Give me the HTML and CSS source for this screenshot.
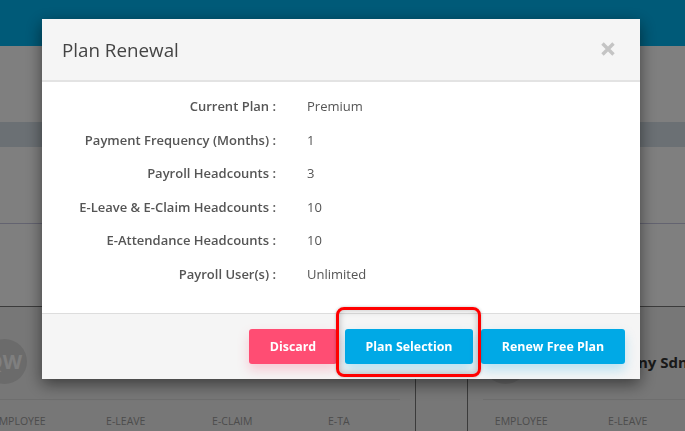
FILE: index.html
```html
<!DOCTYPE html>
<html lang="en">
<head>
    <meta charset="UTF-8">
    <meta name="viewport" content="width=device-width, initial-scale=1.0">
    <title>Plan Renewal</title>
    <link rel="stylesheet" href="styles.css">
</head>
<body>
    <!-- page behind the dialog -->
    <div class="page">
        <div class="topbar"></div>
        <div class="subhead"></div>
        <div class="band"></div>
        <div class="section"></div>
        <div class="section section-tall"></div>
        <div class="cards">
            <div class="card card-left">
                <div class="card-head">
                    <div class="avatar">QW</div>
                </div>
                <div class="stats">
                    <span>EMPLOYEE</span>
                    <span>E-LEAVE</span>
                    <span>E-CLAIM</span>
                    <span>E-TA</span>
                </div>
            </div>
            <div class="card card-right">
                <div class="card-head">
                    <div class="avatar"></div>
                    <div class="company">Demo Company Sdn Bhd</div>
                </div>
                <div class="stats">
                    <span>EMPLOYEE</span>
                    <span>E-LEAVE</span>
                </div>
            </div>
        </div>
    </div>

    <div class="backdrop">
        <div class="modal">
            <div class="modal-header">
                <h4>Plan Renewal</h4>
                <svg class="close" width="14" height="14" viewBox="0 0 14 14">
                    <path d="M1.5 1.5L12.5 12.5M12.5 1.5L1.5 12.5" />
                </svg>
            </div>
            <div class="modal-body">
                <div class="info-row">
                    <div class="info-label">Current Plan :</div>
                    <div class="info-value">Premium</div>
                </div>
                <div class="info-row">
                    <div class="info-label">Payment Frequency (Months) :</div>
                    <div class="info-value">1</div>
                </div>
                <div class="info-row">
                    <div class="info-label">Payroll Headcounts :</div>
                    <div class="info-value">3</div>
                </div>
                <div class="info-row">
                    <div class="info-label">E-Leave &amp; E-Claim Headcounts :</div>
                    <div class="info-value">10</div>
                </div>
                <div class="info-row">
                    <div class="info-label">E-Attendance Headcounts :</div>
                    <div class="info-value">10</div>
                </div>
                <div class="info-row">
                    <div class="info-label">Payroll User(s) :</div>
                    <div class="info-value">Unlimited</div>
                </div>
            </div>
            <div class="modal-footer">
                <button class="btn btn-red">Discard</button>
                <button class="btn btn-blue btn-plan">Plan Selection</button>
                <button class="btn btn-blue btn-free">Renew Free Plan</button>
            </div>
            <!-- red box drawn over the screenshot -->
            <div class="highlight"></div>
        </div>
    </div>
</body>
</html>
```

FILE: styles.css
```css
* {
    box-sizing: border-box;
}

html, body {
    margin: 0;
    height: 431px;
    overflow: hidden;
}

body {
    font-family: "Open Sans", Arial, sans-serif;
    font-size: 13px;
    color: #555;
    background-color: #fff;
}

.page {
    height: 431px;
    overflow: hidden;
}

.topbar {
    height: 46px;
    background-color: #00b4f0;
}

.subhead {
    height: 76px;
}

.band {
    height: 25px;
    background-color: #d6e0e8;
}

.section {
    height: 77px;
    border-bottom: 1px solid #c6c6e0;
}

.section-tall {
    height: 83px;
    border-bottom: 1px solid #777;
}

.cards {
    display: flex;
    margin-left: -58px;
    background-color: #eee;
}

.card {
    height: 125px;
    flex: none;
}

.card-left {
    width: 474px;
    padding-right: 15px;
    border-right: 1px solid #777;
}

.card-right {
    width: 400px;
    margin-left: 51px;
    padding-left: 15px;
    border-left: 1px solid #777;
}

.card-head {
    display: flex;
    align-items: center;
    height: 93px;
    border-bottom: 1px solid #ddd;
}

.card-left .card-head {
    padding-left: 40px;
}

.avatar {
    width: 45px;
    height: 45px;
    margin-top: 17px;
    border-radius: 50%;
    background-color: #d6d6d6;
    color: #fff;
    font-size: 20px;
    font-weight: 700;
    line-height: 45px;
    text-align: center;
    flex: none;
}

.company {
    margin-left: 10px;
    margin-top: 17px;
    font-size: 15px;
    font-weight: 700;
    color: #333;
    white-space: nowrap;
}

.stats {
    display: flex;
    padding-top: 14px;
    font-size: 10.5px;
    color: #999;
}

.card-left .stats {
    padding-left: 24px;
}

.card-right .stats {
    margin-left: -15px;
}

.stats span {
    width: 106.5px;
    text-align: center;
}

/* dialog */
.backdrop {
    position: fixed;
    top: 0;
    left: 0;
    width: 685px;
    height: 431px;
    background-color: rgba(0, 0, 0, 0.5);
}

.modal {
    position: relative;
    width: 598px;
    height: 360px;
    margin: 19px 0 0 42px;
    background-color: #fff;
    box-shadow: 0 5px 15px rgba(0, 0, 0, 0.5);
}

.modal-header {
    display: flex;
    align-items: center;
    justify-content: space-between;
    height: 63px;
    padding: 0 25px 0 20px;
    background-color: #f5f5f5;
    border-bottom: 2px solid #e3e3e3;
}

.modal-header h4 {
    margin: 1px 0 0;
    font-size: 18.8px;
    font-weight: 400;
    color: #444;
}

.close {
    margin-bottom: 2px;
}

.close path {
    fill: none;
    stroke: #c4c4c4;
    stroke-width: 3.4;
}

.modal-body {
    height: 231px;
    padding-top: 8px;
}

.info-row {
    display: flex;
    height: 33.6px;
    line-height: 33.6px;
}

.info-label {
    width: 234px;
    font-weight: 600;
    text-align: right;
}

.info-value {
    margin-left: 31px;
}

.modal-footer {
    display: flex;
    justify-content: flex-end;
    gap: 8px;
    height: 66px;
    padding: 15px 15px 0 0;
    background-color: #f5f5f5;
    border-top: 1px solid #ddd;
}

.btn {
    height: 35px;
    padding: 0;
    border: none;
    border-radius: 3px;
    color: #fff;
    font-family: inherit;
    font-size: 12.4px;
    font-weight: 700;
}

.btn-red {
    width: 88px;
    background-color: #ff4d73;
    box-shadow: 0 6px 12px rgba(255, 77, 115, 0.25);
}

.btn-blue {
    background-color: #00a9e6;
    box-shadow: 0 6px 12px rgba(0, 169, 230, 0.25);
}

.btn-plan {
    width: 128px;
}

.btn-free {
    width: 144px;
}

.highlight {
    position: absolute;
    top: 288px;
    left: 294px;
    width: 145px;
    height: 70px;
    border: 3.5px solid #f00;
    border-radius: 8px;
    box-shadow: inset 0 0 7px rgba(0, 0, 0, 0.28), 0 0 3px rgba(0, 0, 0, 0.25);
}
```
